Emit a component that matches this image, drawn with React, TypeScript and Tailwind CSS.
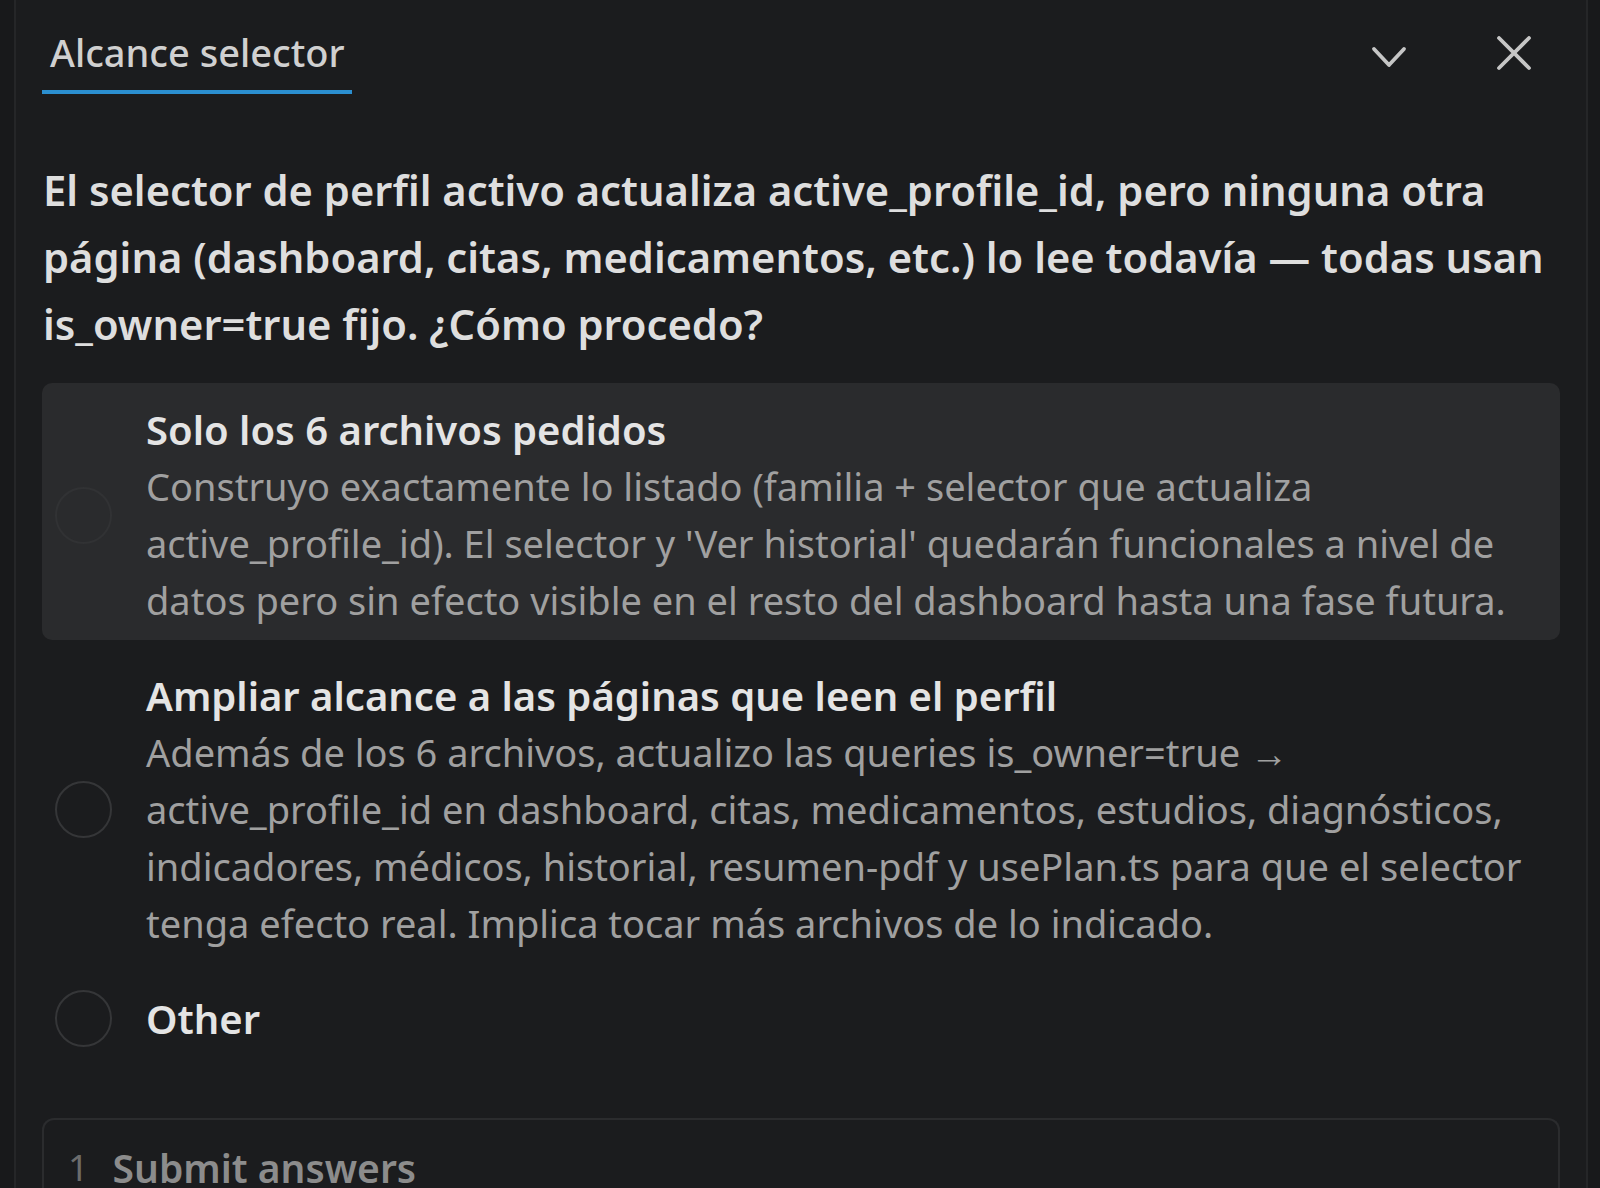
import React from 'react';

const FONT = { fontFamily: '"Noto Sans", "Open Sans", sans-serif' };

interface OptionProps {
  title: string;
  desc?: string;
  highlighted?: boolean;
}

function Option({ title, desc, highlighted = false }: OptionProps) {
  return (
    <div
      className={`flex items-center rounded-[10px] pt-[18px] pb-[11px] pl-[13px] pr-[24px] ${
        highlighted ? 'bg-[#2a2b2d]' : ''
      }`}
    >
      <div
        className={`w-[57px] h-[57px] shrink-0 rounded-full border-2 ${
          highlighted ? 'border-[#313234]' : 'border-[#353638]'
        }`}
      />
      <div className="ml-[34px] min-w-0 flex-1">
        <div className="text-[40px] leading-[57px] font-semibold text-[#e4e4e4]">{title}</div>
        {desc && <div className="text-[38px] leading-[57px] text-[#a0a0a0]">{desc}</div>}
      </div>
    </div>
  );
}

export default function App() {
  return (
    <div className="min-h-screen bg-[#18191b] pl-[14px]" style={FONT}>
      <div className="w-[1574px] h-[1188px] overflow-hidden border-x-2 border-[#252628] bg-[#1b1c1e]">
        {/* header */}
        <div className="flex items-start justify-between pl-[26px] pr-[54px]">
          <div className="pt-[32px] flex flex-col">
            <div className="pl-[8px] text-[38px] leading-[40px] font-medium text-[#d0d0d0]">
              Alcance selector
            </div>
            <div className="mt-[18px] h-[4px] w-[310px] bg-[#2b8fd0]" />
          </div>
          <div className="flex items-center gap-[88px] pt-[34px]">
            <svg width="38" height="40" viewBox="0 0 38 40" fill="none">
              <polyline
                points="4,15 19,31 34,15"
                stroke="#c6c6c6"
                strokeWidth="3.8"
                strokeLinecap="round"
                strokeLinejoin="round"
              />
            </svg>
            <svg width="36" height="36" viewBox="0 0 36 36" fill="none">
              <path d="M3 2 L33 32 M33 2 L3 32" stroke="#c6c6c6" strokeWidth="3.8" strokeLinecap="round" />
            </svg>
          </div>
        </div>

        {/* question */}
        <div className="mt-[62px] pl-[27px] pr-[6px] text-[41.7px] leading-[67px] font-semibold text-[#dedede]">
          El selector de perfil activo actualiza active_profile_id, pero ninguna otra página (dashboard, citas,
          medicamentos, etc.) lo lee todavía — todas usan is_owner=true fijo. ¿Cómo procedo?
        </div>

        {/* options */}
        <div className="mt-[26px] ml-[26px] mr-[26px] flex flex-col gap-[9px]">
          <Option
            highlighted
            title="Solo los 6 archivos pedidos"
            desc="Construyo exactamente lo listado (familia + selector que actualiza active_profile_id). El selector y 'Ver historial' quedarán funcionales a nivel de datos pero sin efecto visible en el resto del dashboard hasta una fase futura."
          />
          <Option
            title="Ampliar alcance a las páginas que leen el perfil"
            desc="Además de los 6 archivos, actualizo las queries is_owner=true → active_profile_id en dashboard, citas, medicamentos, estudios, diagnósticos, indicadores, médicos, historial, resumen-pdf y usePlan.ts para que el selector tenga efecto real. Implica tocar más archivos de lo indicado."
          />
          <Option title="Other" />
        </div>

        {/* submit */}
        <div className="mt-[60px] mx-[26px] h-[200px] rounded-t-[12px] border-2 border-b-0 border-[#2b2c2e] pt-[26px] pl-[24px] flex items-start gap-[24px]">
          <span className="text-[36px] leading-[44px] text-[#6c6c6c]">1</span>
          <span className="text-[39px] leading-[44px] font-semibold text-[#8c8c8c]">Submit answers</span>
        </div>
      </div>
    </div>
  );
}
